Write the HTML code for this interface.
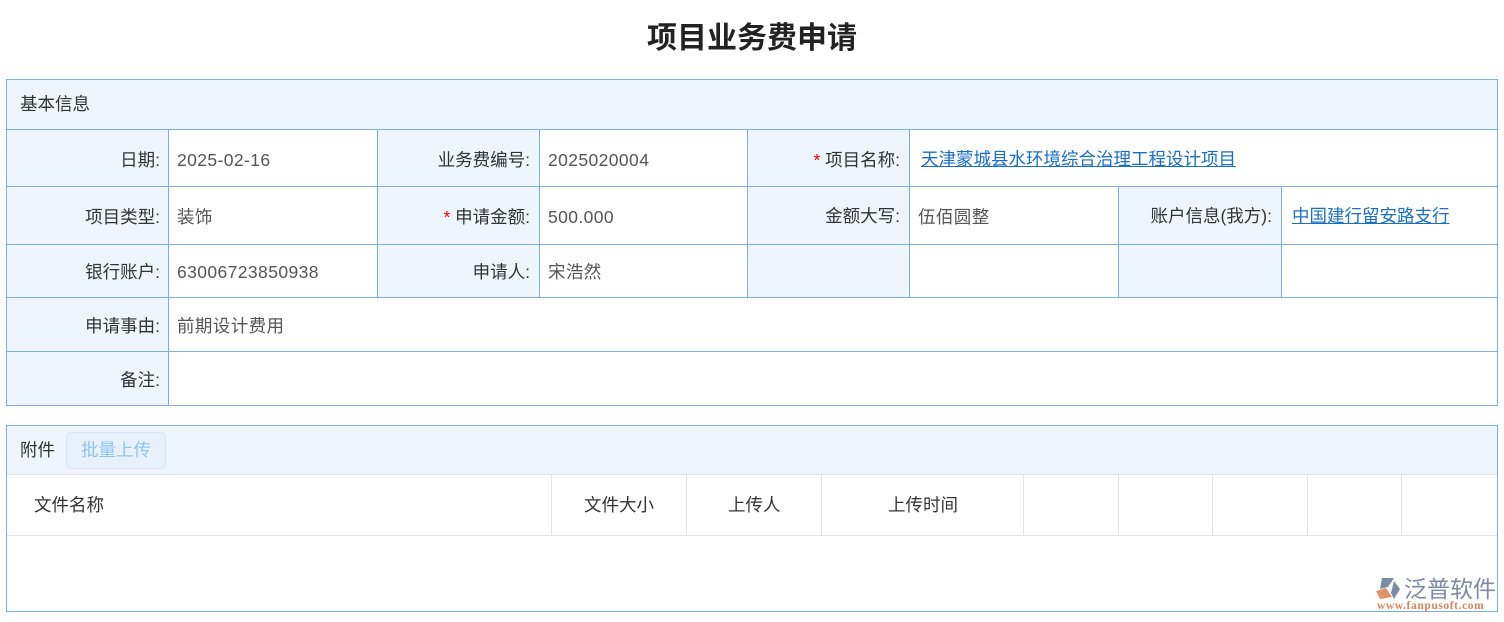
<!DOCTYPE html><html><head><meta charset="utf-8"><style>
body{margin:0;width:1504px;height:622px;background:#fff;font-family:"Liberation Sans","Noto Sans CJK SC",sans-serif;position:relative;overflow:hidden}
div{position:absolute;box-sizing:border-box}
.t{font-size:17.5px;line-height:20px;white-space:nowrap}
.l{color:#333;text-align:right}
.v{color:#555;letter-spacing:0.4px}
.a{color:#1a6fc4;text-decoration:underline}
.bg{background:#eef5fd}
.hl{height:1px;background:#7ab0e0}
.vl{width:1px;background:#7ab0e0}
.gh{height:1px;background:#e3e3e3}
.gv{width:1px;background:#e3e3e3}
.s{color:#e00}
</style></head><body>
<div class="t" style="left:0;width:1504px;top:21px;text-align:center;font-size:30px;line-height:36px;font-weight:bold;color:#222">项目业务费申请</div>

<div style="left:6px;top:79px;width:1492px;height:327px;border:1px solid #7ab0e0"></div>
<div class="bg" style="left:7px;top:80px;width:1490px;height:49px"></div>
<div class="bg" style="left:7px;top:130px;width:161px;height:275px"></div>
<div class="bg" style="left:378px;top:130px;width:161px;height:167px"></div>
<div class="bg" style="left:748px;top:130px;width:161px;height:167px"></div>
<div class="bg" style="left:1119px;top:187px;width:162px;height:110px"></div>
<div class="hl" style="left:6px;top:129px;width:1492px"></div>
<div class="hl" style="left:6px;top:186px;width:1492px"></div>
<div class="hl" style="left:6px;top:244px;width:1492px"></div>
<div class="hl" style="left:6px;top:297px;width:1492px"></div>
<div class="hl" style="left:6px;top:351px;width:1492px"></div>
<div class="vl" style="left:168px;top:129px;height:276px"></div>
<div class="vl" style="left:377px;top:129px;height:168px"></div>
<div class="vl" style="left:539px;top:129px;height:168px"></div>
<div class="vl" style="left:747px;top:129px;height:168px"></div>
<div class="vl" style="left:909px;top:129px;height:168px"></div>
<div class="vl" style="left:1118px;top:186px;height:111px"></div>
<div class="vl" style="left:1281px;top:186px;height:111px"></div>

<div class="t" style="left:20px;top:94px;color:#333">基本信息</div>
<div class="t l" style="left:6px;width:154px;top:150px">日期:</div>
<div class="t v" style="left:177px;top:150px">2025-02-16</div>
<div class="t l" style="left:377px;width:153px;top:150px">业务费编号:</div>
<div class="t v" style="left:548px;top:150px">2025020004</div>
<div class="t l" style="left:747px;width:153px;top:150px"><span class="s">*</span> 项目名称:</div>
<div class="t a" style="left:921px;top:149px">天津蒙城县水环境综合治理工程设计项目</div>

<div class="t l" style="left:6px;width:154px;top:207px">项目类型:</div>
<div class="t v" style="left:177px;top:207px">装饰</div>
<div class="t l" style="left:377px;width:153px;top:207px"><span class="s">*</span> 申请金额:</div>
<div class="t v" style="left:548px;top:207px">500.000</div>
<div class="t l" style="left:747px;width:153px;top:206px">金额大写:</div>
<div class="t v" style="left:918px;top:207px">伍佰圆整</div>
<div class="t l" style="left:1118px;width:154px;top:206px">账户信息(我方):</div>
<div class="t a" style="left:1292px;top:206px">中国建行留安路支行</div>

<div class="t l" style="left:6px;width:154px;top:262px">银行账户:</div>
<div class="t v" style="left:177px;top:262px">63006723850938</div>
<div class="t l" style="left:377px;width:153px;top:262px">申请人:</div>
<div class="t v" style="left:548px;top:262px">宋浩然</div>

<div class="t l" style="left:6px;width:154px;top:316px">申请事由:</div>
<div class="t v" style="left:177px;top:316px">前期设计费用</div>
<div class="t l" style="left:6px;width:154px;top:370px">备注:</div>

<div style="left:6px;top:425px;width:1492px;height:187px;border:1px solid #7ab0e0"></div>
<div class="bg" style="left:7px;top:426px;width:1490px;height:48px"></div>
<div class="gh" style="left:7px;top:474px;width:1490px"></div>
<div class="gh" style="left:7px;top:535px;width:1490px"></div>
<div class="gv" style="left:551px;top:475px;height:60px"></div>
<div class="gv" style="left:686px;top:475px;height:60px"></div>
<div class="gv" style="left:821px;top:475px;height:60px"></div>
<div class="gv" style="left:1023px;top:475px;height:60px"></div>
<div class="gv" style="left:1118px;top:475px;height:60px"></div>
<div class="gv" style="left:1212px;top:475px;height:60px"></div>
<div class="gv" style="left:1307px;top:475px;height:60px"></div>
<div class="gv" style="left:1401px;top:475px;height:60px"></div>
<div class="t" style="left:20px;top:440px;color:#333">附件</div>
<div style="left:66px;top:432px;width:100px;height:37px;border:1px solid #d6e6f7;border-radius:5px;background:#e6f1fc"></div>
<div class="t" style="left:81px;top:440px;color:#8fc2ef">批量上传</div>
<div class="t" style="left:34px;top:495px;color:#333">文件名称</div>
<div class="t" style="left:584px;top:495px;color:#333">文件大小</div>
<div class="t" style="left:728px;top:495px;color:#333">上传人</div>
<div class="t" style="left:888px;top:495px;color:#333">上传时间</div>

<svg style="position:absolute;left:1374px;top:577px" width="28" height="24" viewBox="0 0 28 24"><path d="M8 1 L20 1 L14 10 L6 12 Z" fill="#7c8aa6"/><path d="M2 14 L12 11 L18 20 L6 22 Z" fill="#e0926a"/><path d="M20 4 L26 12 L20 22 L17 16 Z" fill="#7c8aa6"/></svg>
<div class="t" style="left:1404px;top:576px;font-size:23px;line-height:26px;color:#7c8aa6">泛普软件</div>
<div class="t" style="left:1377px;top:600px;font-size:11.5px;line-height:12px;color:#d9845a;font-family:'Liberation Serif',serif;font-weight:bold;letter-spacing:0.6px">www.fanpusoft.com</div>
</body></html>
